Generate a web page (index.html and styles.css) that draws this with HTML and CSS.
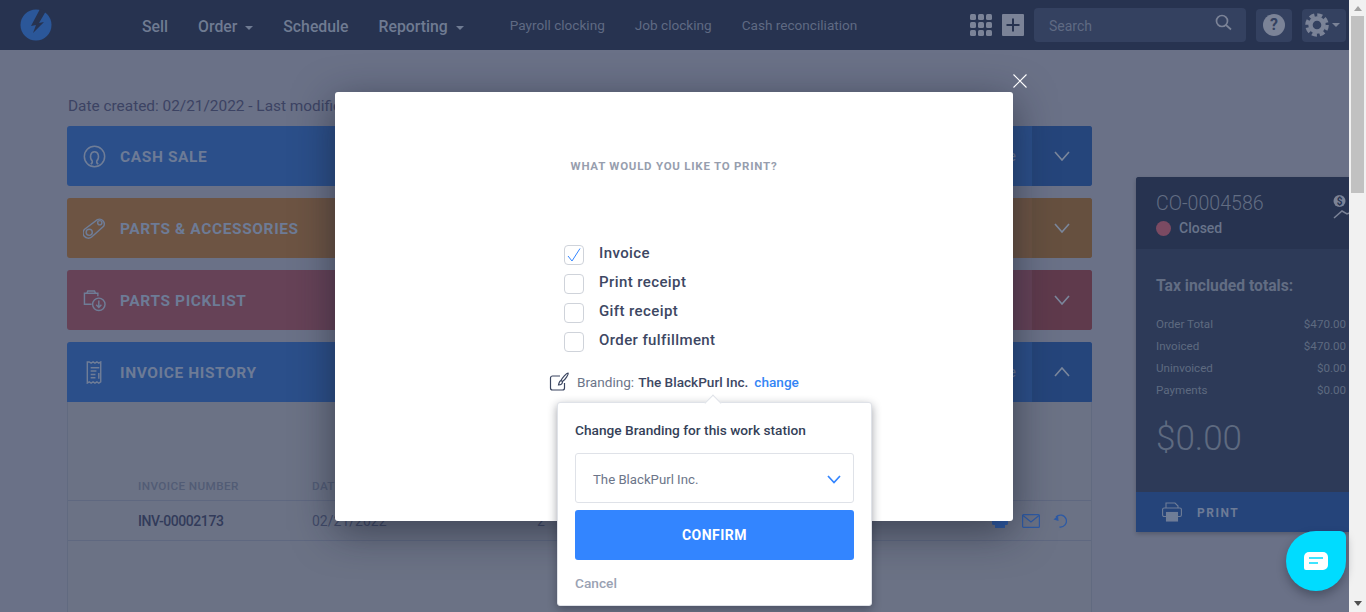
FILE: index.html
```html
<!DOCTYPE html>
<html lang="en">
<head>
  <meta charset="UTF-8">
  <title>Customer order</title>
  <link rel="stylesheet" href="styles.css">
</head>
<body>

<div class="app">
  <div class="page">

    <nav class="topbar">
      <svg class="logo" width="32" height="32" viewBox="0 0 32 32">
        <circle cx="16" cy="16" r="15.5" fill="#2b5799"/>
        <path d="M20 0 L26 2 L19 14 L24 13 L13 24 L16 16 L11 17 Z" fill="#273350"/>
      </svg>
      <div class="main-links">
        <a>Sell</a>
        <a>Order <i class="caret"></i></a>
        <a>Schedule</a>
        <a>Reporting <i class="caret"></i></a>
      </div>
      <div class="sub-links">
        <a>Payroll clocking</a>
        <a>Job clocking</a>
        <a>Cash reconciliation</a>
      </div>
      <div class="tools">
        <svg width="23" height="23" viewBox="0 0 23 23" fill="#7b8397">
          <rect x="0" y="0" width="6" height="6" rx="1.5"/><rect x="8" y="0" width="6" height="6" rx="1.5"/><rect x="16" y="0" width="6" height="6" rx="1.5"/>
          <rect x="0" y="8" width="6" height="6" rx="1.5"/><rect x="8" y="8" width="6" height="6" rx="1.5"/><rect x="16" y="8" width="6" height="6" rx="1.5"/>
          <rect x="0" y="16" width="6" height="6" rx="1.5"/><rect x="8" y="16" width="6" height="6" rx="1.5"/><rect x="16" y="16" width="6" height="6" rx="1.5"/>
        </svg>
        <svg class="plus" width="22" height="22" viewBox="0 0 22 22">
          <rect width="22" height="22" rx="1" fill="#7b8397"/>
          <path d="M11 4.5v13M4.5 11h13" stroke="#273350" stroke-width="2"/>
        </svg>
        <div class="search">
          <span>Search</span>
          <svg width="17" height="17" viewBox="0 0 17 17" fill="none" stroke="#7b8397" stroke-width="1.7">
            <circle cx="7" cy="7" r="5.5"/><path d="M11 11l5 4.5"/>
          </svg>
        </div>
        <div class="tool-btn help"><b>?</b></div>
        <div class="tool-btn gear">
          <svg width="24" height="24" viewBox="0 0 24 24" fill="none" stroke="#7b8397">
            <circle cx="12" cy="12" r="6.5" stroke-width="4.4"/>
            <circle cx="12" cy="12" r="10" stroke-width="3.6" stroke-dasharray="5 2.85"/>
          </svg>
          <i class="caret"></i>
        </div>
      </div>
    </nav>

    <div class="content">
      <div class="main">
        <p class="dates">Date created: 02/21/2022 - Last modified: 02/21/2022</p>

        <section class="card blue">
          <svg width="24" height="24" viewBox="0 0 24 24" fill="none" stroke="#6f7d97" stroke-width="1.6">
            <circle cx="12" cy="12" r="10.6"/>
            <path d="M8 20c2-1 2-2 1.6-3.4C8 15 7.6 12.400 8 10.500c.5-2.400 2-3.500 4-3.500s3.500 1.100 4 3.500c.4 1.900 0 4.500-1.600 6.100C14 18 14 19 16 20"/>
          </svg>
          <h3>CASH SALE</h3>
          <span class="note">e</span>
          <span class="toggle"><svg width="16" height="10" viewBox="0 0 16 10" fill="none" stroke="#7b879c" stroke-width="1.6"><path d="M1 1l7 8 7-8"/></svg></span>
        </section>

        <section class="card orange">
          <svg width="24" height="24" viewBox="0 0 24 24" fill="none" stroke="#6f7d97" stroke-width="1.500">
            <path d="M2 12.500L15 2.800a5 5 0 0 1 6.500 7L9 20.800a5 5 0 0 1-7-8.300z"/>
            <circle cx="6.500" cy="16" r="3.200"/><circle cx="17.500" cy="6" r="2.200"/>
          </svg>
          <h3>PARTS &amp; ACCESSORIES</h3>
          <span class="toggle"><svg width="16" height="10" viewBox="0 0 16 10" fill="none" stroke="#7b879c" stroke-width="1.6"><path d="M1 1l7 8 7-8"/></svg></span>
        </section>

        <section class="card red">
          <svg width="24" height="24" viewBox="0 0 24 24" fill="none" stroke="#6f7d97" stroke-width="1.500">
            <path d="M9 16H1.500V4.500h14v3"/><path d="M4 4.500l1-2.500h7l1 2.500"/>
            <circle cx="16.500" cy="16" r="6.500"/><path d="M16.500 12v7M13.800 16.500l2.700 2.700 2.700-2.700"/>
          </svg>
          <h3>PARTS PICKLIST</h3>
          <span class="toggle"><svg width="16" height="10" viewBox="0 0 16 10" fill="none" stroke="#7b879c" stroke-width="1.6"><path d="M1 1l7 8 7-8"/></svg></span>
        </section>

        <section class="card blue open">
          <svg width="24" height="24" viewBox="0 0 24 24" fill="none" stroke="#6f7d97" stroke-width="1.500">
            <path d="M4.500 1v22l2-1.300 2 1.300 2-1.300 2 1.300 2-1.300 2 1.300 2-1.300V1l-2 1.300-2-1.300-2 1.300-2-1.300-2 1.300-2-1.300z"/>
            <path d="M8 7h9M8 10.500h6M8 14h5M8 17.500h5M16.500 12.500v6"/>
          </svg>
          <h3>INVOICE HISTORY</h3>
          <span class="note">e</span>
          <span class="toggle"><svg width="16" height="10" viewBox="0 0 16 10" fill="none" stroke="#7b879c" stroke-width="1.6"><path d="M1 9l7-8 7 8"/></svg></span>
        </section>

        <div class="history">
          <div class="row head">
            <span>INVOICE NUMBER</span>
            <span>DATE</span>
          </div>
          <div class="row item">
            <b>INV-00002173</b>
            <span>02/21/2022</span>
            <span>2</span>
            <span class="row-icons">
              <svg width="18" height="16" viewBox="0 0 18 16" fill="#2d5aa5"><rect x="1" y="5" width="16" height="7" rx="1.500"/><rect x="4" y="10" width="10" height="5"/></svg>
              <svg width="18" height="14" viewBox="0 0 18 14" fill="none" stroke="#2d5aa5" stroke-width="1.200"><rect x=".6" y=".6" width="16.800" height="12.800" rx="1"/><path d="M1 1.500l8 6.500 8-6.500"/></svg>
              <svg width="14" height="14" viewBox="0 0 14 14" fill="none" stroke="#2d5aa5" stroke-width="1.300"><path d="M3 3a6 6 0 1 1 3.500 10"/><path d="M.5 5.500L5 1.500 5.500 7z" fill="#2d5aa5" stroke="none"/></svg>
            </span>
          </div>
        </div>
      </div>

      <aside class="summary">
        <header class="summary-head">
          <div class="co-number">CO-0004586</div>
          <div class="status"><i class="dot"></i><b>Closed</b></div>
          <svg class="trend" width="24" height="26" viewBox="0 0 24 26" fill="none" stroke="#7b8397" stroke-width="1.500">
            <circle cx="7.500" cy="8" r="6" fill="#7b8397" stroke="none"/>
            <text x="7.500" y="11.500" text-anchor="middle" font-size="10" font-weight="700" fill="#273350" stroke="none">$</text>
            <path d="M2 25l8-7 5 3 9-4"/>
          </svg>
        </header>
        <div class="summary-body">
          <h4>Tax included totals:</h4>
          <dl class="totals">
            <div><dt>Order Total</dt><dd>$470.00</dd></div>
            <div><dt>Invoiced</dt><dd>$470.00</dd></div>
            <div><dt>Uninvoiced</dt><dd>$0.00</dd></div>
            <div><dt>Payments</dt><dd>$0.00</dd></div>
          </dl>
          <div class="balance">$0.00</div>
        </div>
        <footer class="summary-print">
          <svg width="20" height="20" viewBox="0 0 20 20" fill="none" stroke="#6f7d97" stroke-width="1.100">
            <path d="M4 6V1h9l3 3v2"/><rect x=".6" y="6" width="18.800" height="8.500" rx="1.500"/>
            <rect x="4.500" y="10.500" width="11" height="8.500" fill="#6f7d97"/>
          </svg>
          <span>PRINT</span>
        </footer>
      </aside>
    </div>
  </div>

  <div class="scrollbar">
    <i class="arrow up"></i>
    <div class="thumb"></div>
    <i class="arrow down"></i>
  </div>
</div>

<!-- print dialog -->
<div class="modal">
  <svg class="modal-close" width="16" height="16" viewBox="0 0 16 16" stroke="#fff" stroke-width="1.100"><path d="M1.500 1.500l13 13M14.500 1.500l-13 13"/></svg>
  <h2>WHAT WOULD YOU LIKE TO PRINT?</h2>

  <div class="options">
    <label class="option">
      <span class="box">
        <svg width="16" height="16" viewBox="0 0 16 16" fill="none" stroke="#3385ff" stroke-width="1"><path d="M2 9l4 5L14 1.500"/></svg>
      </span>
      <span class="option-text">Invoice</span>
    </label>
    <label class="option"><span class="box"></span><span class="option-text">Print receipt</span></label>
    <label class="option"><span class="box"></span><span class="option-text">Gift receipt</span></label>
    <label class="option"><span class="box"></span><span class="option-text">Order fulfillment</span></label>
  </div>

  <div class="branding">
    <svg width="21" height="20" viewBox="0 0 21 20" fill="none" stroke="#3a4560" stroke-width="1.200">
      <path d="M11 4H3.500A2 2 0 0 0 1.500 6v10a2 2 0 0 0 2 2h10a2 2 0 0 0 2-2v-5"/>
      <path d="M19 1c1 1-3 7-5.500 8.500L12 8.500C13 6 17.500 1 19 1zM12 8.500c-1.500.5-2 2-2.500 4.500 2 0 4-.8 4-3.500"/>
    </svg>
    <span class="branding-label">Branding:</span>
    <b>The BlackPurl Inc.</b>
    <a>change</a>
  </div>

  <div class="popover">
    <h5>Change Branding for this work station</h5>
    <div class="select">
      <span>The BlackPurl Inc.</span>
      <svg width="14" height="9" viewBox="0 0 14 9" fill="none" stroke="#3385ff" stroke-width="1.700"><path d="M1 1l6 6.500L13 1"/></svg>
    </div>
    <button class="confirm">CONFIRM</button>
    <a class="cancel">Cancel</a>
  </div>
</div>

<div class="chat">
  <svg width="24" height="18" viewBox="0 0 24 18">
    <path d="M5 0h14a5 5 0 0 1 5 5v8a5 5 0 0 1-5 5H2a2 2 0 0 1-2-2V5a5 5 0 0 1 5-5z" fill="#fff"/>
    <path d="M5 6h14M5 11h9" stroke="#00dcff" stroke-width="1.600"/>
  </svg>
</div>

</body>
</html>
```

FILE: styles.css
```css
* { box-sizing: border-box; }
html, body { margin: 0; height: 100%; overflow: hidden; }
body { font-family: Roboto, "Liberation Sans", sans-serif; background: #6a7187; color: #3a4260; }
h2, h3, h4, h5, p, dl, dd { margin: 0; }

.app { display: flex; height: 612px; overflow: hidden; }
.page { width: 1349px; flex: none; overflow: hidden; }

/* top bar */
.topbar { height: 50px; background: #273350; display: flex; align-items: center; padding-left: 20px; }
.logo { flex: none; }
.main-links { display: flex; gap: 30px; margin-left: 90px; padding-top: 2px; font-size: 15.8px; font-weight: 500; color: #6f7b92; }
.main-links a { white-space: nowrap; }
.caret { display: inline-block; border: 4px solid transparent; border-top-color: currentColor; border-bottom: 0; margin-left: 4px; vertical-align: 2px; }
.sub-links { display: flex; gap: 30px; margin-left: 46px; font-size: 13.6px; color: #5f6a83; }
.sub-links a { white-space: nowrap; }
.tools { margin-left: auto; display: flex; align-items: center; padding-right: 3px; }
.plus { margin-left: 9px; }
.search { width: 212px; height: 34px; margin-left: 10px; padding: 2px 14px 0 15px; background: #344160; border-radius: 4px; display: flex; align-items: center; justify-content: space-between; font-size: 14px; color: #5f6a83; }
.search svg { margin-top: -8px; }
.tool-btn { height: 33px; background: #344160; border-radius: 4px; display: flex; align-items: center; }
.help { width: 36px; margin-left: 10px; justify-content: center; }
.help b { width: 22px; height: 22px; border-radius: 50%; background: #7b8397; color: #344160; font-size: 16px; line-height: 22px; text-align: center; }
.gear { width: 44px; margin-left: 10px; padding-left: 3px; color: #7b8397; }
.gear .caret { margin-left: 3px; }

/* page content */
.content { display: flex; align-items: flex-start; padding-left: 67px; }
.main { width: 1025px; flex: none; }
.dates { margin: 46px 0 11px 1px; height: 19px; font-size: 15.4px; line-height: 20px; color: #3c4363; white-space: nowrap; }

.card { height: 60px; margin-bottom: 12px; padding-left: 16px; border-radius: 3px; display: flex; align-items: center; color: #6d7b96; }
.card > svg { width: 23px; height: 23px; flex: none; }
.card h3 { margin-left: 14px; padding-top: 2px; font-size: 15.5px; font-weight: 700; letter-spacing: .6px; }
.card.blue { background: #2b4f8a; }
.card.orange { background: #6d5443; }
.card.red { background: #664257; }
.card.open { margin-bottom: 0; border-radius: 3px 3px 0 0; }
.note { margin-left: auto; margin-right: 16px; font-size: 15px; }
.toggle { width: 60px; height: 60px; margin-left: auto; display: flex; align-items: center; justify-content: center; background: #25457b; border-radius: 0 3px 3px 0; }
.note + .toggle { margin-left: 0; }
.orange .toggle { background: #66503f; }
.red .toggle { background: #5f3a4c; }

.history { height: 220px; padding-top: 72px; border: solid #616a80; border-width: 0 1px; background: #6b7285; }
.row { display: grid; grid-template-columns: 174px 225px 1fr auto; padding-left: 70px; border-bottom: 1px solid #5f6880; align-items: center; }
.row.head { height: 27px; padding-bottom: 2px; font-size: 11.7px; font-weight: 500; letter-spacing: .4px; color: #525c75; }
.row.item { height: 40px; font-size: 14px; color: #414a68; }
.row.item b { font-weight: 500; letter-spacing: -.45px; color: #323b5a; }
.row-icons { display: flex; align-items: center; justify-content: flex-end; gap: 13px; padding-right: 24px; }

/* order summary */
.summary { width: 214px; flex: none; margin: 127px 0 0 44px; border-radius: 3px 0 0 0; background: #2d3a58; box-shadow: 0 2px 4px rgba(0, 0, 0, .2); overflow: hidden; }
.summary-head { position: relative; height: 72px; padding: 15px 0 0 20px; background: #273350; }
.co-number { font-size: 19.6px; font-weight: 300; line-height: 24px; color: #626d83; }
.status { display: flex; align-items: center; margin-top: 4px; font-size: 14px; color: #68738a; }
.status b { font-weight: 500; }
.dot { width: 15px; height: 15px; margin-right: 8px; border-radius: 50%; background: #7b4a62; }
.trend { position: absolute; top: 16px; left: 196px; }
.summary-body { height: 243px; padding: 28px 4px 0 20px; }
.summary-body h4 { font-size: 15.7px; font-weight: 700; line-height: 18px; color: #626d83; }
.totals { margin-top: 18px; font-size: 11.6px; color: #5e6a80; }
.totals div { display: flex; justify-content: space-between; height: 22px; line-height: 22px; }
.balance { margin-top: 18px; font-size: 35px; font-weight: 300; line-height: 40px; color: #5e6a80; }
.summary-print { height: 40px; padding: 1px 0 0 26px; background: #25447a; display: flex; align-items: center; gap: 15px; font-size: 12px; font-weight: 700; letter-spacing: 1.5px; color: #6d7b96; }
.summary-print svg { margin-top: -1px; }

/* fake browser scrollbar, stays bright above the dim */
.scrollbar { width: 17px; flex: none; background: #f1f1f1; display: flex; flex-direction: column; align-items: center; padding: 6px 0; }
.thumb { width: 13px; height: 177px; margin-top: 5px; background: #c1c1c1; }
.arrow { border: 4px solid transparent; }
.arrow.up { border-top: 0; border-bottom: 5px solid #a3a3a3; }
.arrow.down { margin-top: auto; border-bottom: 0; border-top: 5px solid #505050; }

/* print dialog */
.modal { position: absolute; left: 335px; top: 92px; width: 678px; height: 429px; padding-top: 67px; background: #fff; border-radius: 3px; box-shadow: 0 10px 40px rgba(20, 25, 40, .55); }
.modal-close { position: absolute; top: -19px; right: -15px; }
.modal h2 { font-size: 11.5px; font-weight: 700; letter-spacing: .75px; line-height: 15px; text-align: center; color: #979eae; }

.options { margin: 71px 0 0 229px; display: flex; flex-direction: column; gap: 9px; }
.option { height: 20px; display: flex; align-items: center; font-size: 15px; font-weight: 500; letter-spacing: .4px; color: #3d4763; }
.option-text { margin-top: -4px; }
.box { width: 20px; height: 20px; margin-right: 15px; border: 1px solid #cfd3da; border-radius: 4px; display: flex; align-items: center; justify-content: center; }

.branding { margin: 20px 0 0 214px; display: flex; align-items: center; font-size: 13.6px; white-space: nowrap; }
.branding svg { margin-right: 7px; }
.branding-label { color: #6c7589; }
.branding b { margin-left: 4px; font-weight: 500; color: #3d4763; }
.branding a { margin-left: 6px; font-weight: 500; color: #3385f5; }

.popover { position: absolute; left: 222px; top: 310px; width: 315px; height: 204px; padding: 19px 17px 0; background: #fff; border: 1px solid #dfe2e8; border-radius: 3px; box-shadow: 0 3px 10px rgba(20, 25, 40, .4); }
.popover::before { content: ""; position: absolute; left: 149px; top: -6px; width: 11px; height: 11px; background: #fff; border: solid #dfe2e8; border-width: 1px 0 0 1px; transform: rotate(45deg); }
.popover h5 { font-size: 13.7px; font-weight: 500; line-height: 17px; color: #353f58; }
.select { height: 50px; margin-top: 14px; padding: 2px 12px 0 17px; border: 1px solid #dfe2e8; border-radius: 3px; display: flex; align-items: center; justify-content: space-between; font-size: 13.2px; color: #6c7589; }
.confirm { display: block; width: 100%; height: 50px; margin-top: 7px; border: 0; border-radius: 3px; background: #3385ff; color: #fff; font-family: inherit; font-size: 14px; font-weight: 700; letter-spacing: .5px; }
.cancel { display: block; margin-top: 15px; font-size: 13.7px; font-weight: 500; color: #9aa2b3; }

/* chat launcher */
.chat { position: absolute; left: 1286px; top: 531px; width: 60px; height: 60px; background: #00dcff; border-radius: 50% 6px 50% 50%; box-shadow: 0 5px 10px rgba(20, 25, 40, .35); display: flex; align-items: center; justify-content: center; }
```
